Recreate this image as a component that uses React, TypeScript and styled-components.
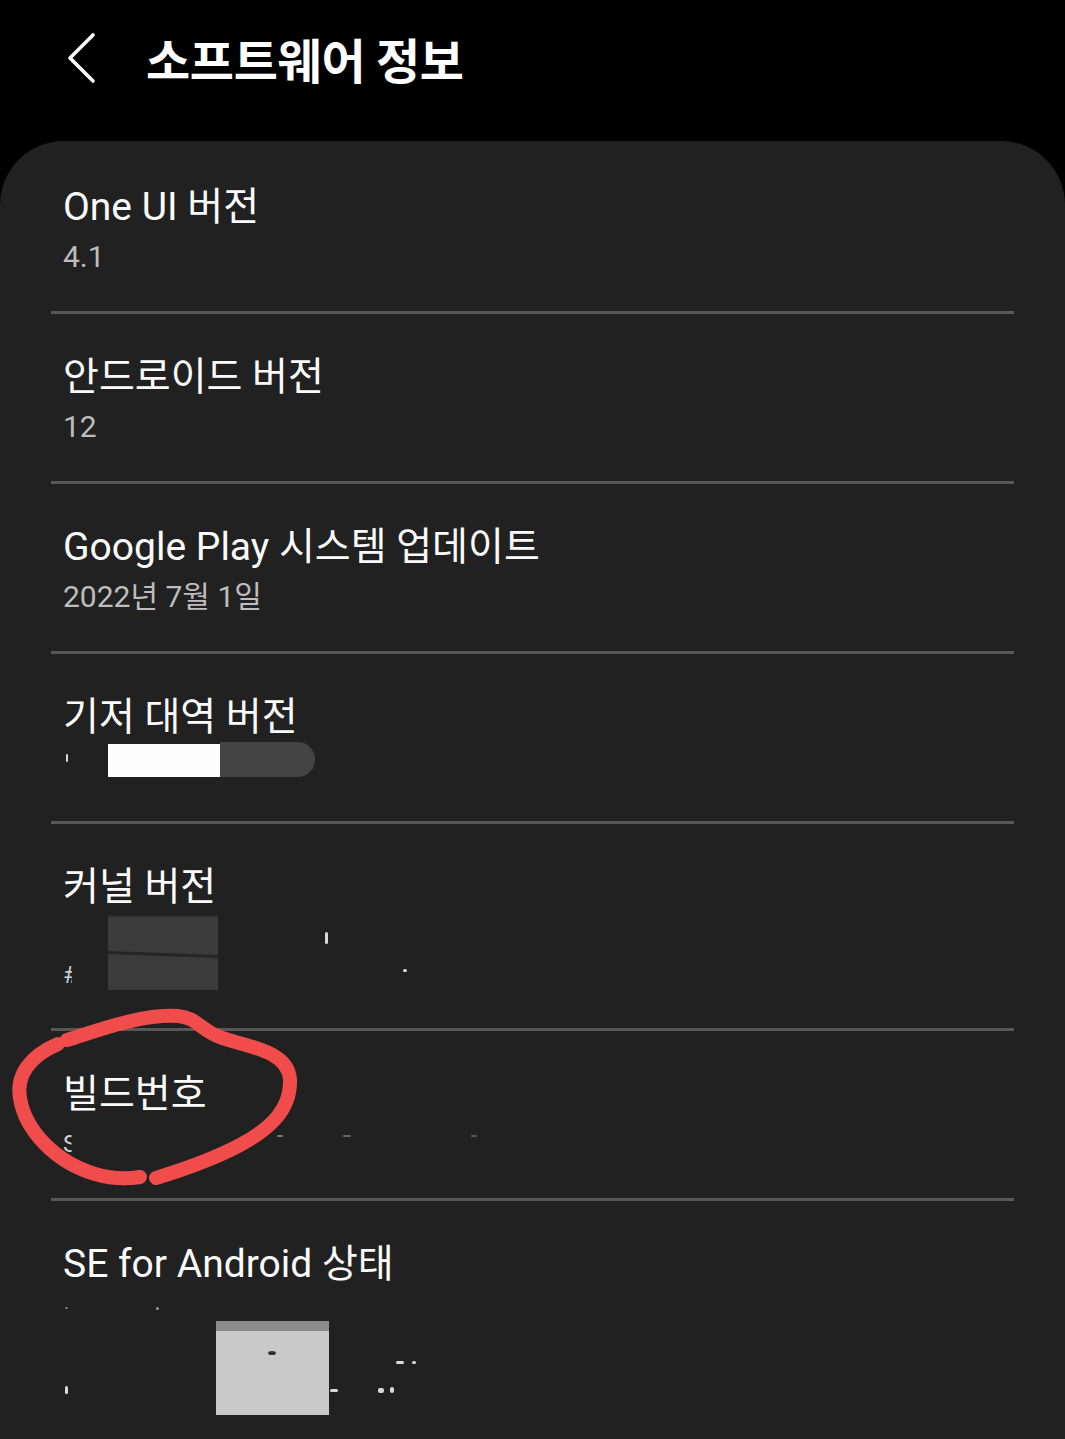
import React from 'react';
import styled, { createGlobalStyle } from 'styled-components';

const GlobalStyle = createGlobalStyle`
    html, body {
        margin: 0;
        padding: 0;
        background: #000;
    }
    body {
        font-family: Roboto, "Noto Sans CJK KR", sans-serif;
    }
`;

const Page = styled.main`
    width: 1065px;
    min-height: 1439px;
    background: #000;
    display: flex;
    flex-direction: column;
    overflow: hidden;
`;

const Header = styled.header`
    height: 141px;
    box-sizing: border-box;
    display: flex;
    align-items: flex-start;
    padding: 28px 0 0 66px;
    gap: 48px;
`;

const BackButton = styled.button`
    width: 32px;
    height: 60px;
    padding: 0;
    border: none;
    background: none;
    display: flex;
    align-items: center;
    justify-content: center;
`;

const Title = styled.h1`
    margin: 0;
    color: #fff;
    font-family: "Noto Sans CJK KR", Roboto, sans-serif;
    font-size: 48px;
    font-weight: 700;
    line-height: 60px;
    letter-spacing: -0.3px;
`;

const Card = styled.section`
    flex: 1;
    background: #212121;
    border-radius: 64px 64px 0 0;
    padding: 3px 51px 0;
`;

const Row = styled.div<{ $last?: boolean }>`
    position: relative;
    padding: 38px 12px 35px;
    border-bottom: ${(p) => (p.$last ? 'none' : '3px solid #575757')};
`;

const RowTitle = styled.div`
    color: #fafafa;
    font-size: 39px;
    line-height: 50px;
    height: 50px;
    white-space: nowrap;
`;

const RowValue = styled.div`
    margin-top: 6px;
    color: #bdbdbd;
    font-size: 30px;
    line-height: 38px;
    min-height: 38px;
`;

const RedactLine = styled.div`
    display: flex;
    align-items: center;
    height: 38px;
    position: relative;
`;

const Block = styled.div<{ $w: number; $h: number; $bg: string; $round?: string; $shift?: number }>`
    width: ${(p) => p.$w}px;
    height: ${(p) => p.$h}px;
    background: ${(p) => p.$bg};
    border-radius: ${(p) => p.$round ?? '0'};
    flex: none;
    transform: translateY(${(p) => p.$shift ?? 0}px);
`;

const Speck = styled.span<{ $w: number; $h: number; $gap: number; $color?: string; $shift?: number }>`
    display: inline-block;
    width: ${(p) => p.$w}px;
    height: ${(p) => p.$h}px;
    margin-left: ${(p) => p.$gap}px;
    background: ${(p) => p.$color ?? '#d8d8d8'};
    border-radius: 2px;
    flex: none;
    transform: translateY(${(p) => p.$shift ?? 0}px);
`;

const Fragment = styled.span<{ $gap?: number }>`
    color: #cfcfcf;
    font-size: 24px;
    line-height: 1;
    margin-left: ${(p) => p.$gap ?? 0}px;
    clip-path: inset(0 40% 0 0);
`;

const KernelBox = styled.div`
    position: relative;
    height: 75px;
`;

const KernelBlock = styled.div`
    position: absolute;
    left: 45px;
    top: -3px;
    width: 110px;
    height: 73px;
    background: #3b3b3b;
    border-top: 2px solid #2a2a2a;
    &::after {
        content: '';
        position: absolute;
        left: 0;
        right: 0;
        top: 36px;
        height: 3px;
        background: #262626;
        transform: skewY(2deg);
    }
`;

const SeBox = styled.div`
    position: relative;
    height: 120px;
`;

const SeBlock = styled.div`
    position: absolute;
    left: 153px;
    top: 26px;
    width: 113px;
    height: 94px;
    background: #c9c9c9;
    border-top: 10px solid #8c8c8c;
    box-sizing: border-box;
    &::after {
        content: '';
        position: absolute;
        left: 52px;
        top: 20px;
        width: 8px;
        height: 4px;
        border-radius: 50%;
        background: #333;
    }
`;

const Marker = styled.svg`
    position: absolute;
    left: -51px;
    top: -31px;
    width: 320px;
    height: 200px;
    pointer-events: none;
    overflow: visible;
`;

const ChevronLeft = () => (
    <svg width="32" height="52" viewBox="0 0 32 52" fill="none">
        <polyline points="27,3 4,26 27,49" stroke="#fff" strokeWidth="3.6" strokeLinecap="round" strokeLinejoin="round" />
    </svg>
);

const items = [
    { title: 'One UI 버전', value: '4.1' },
    { title: '안드로이드 버전', value: '12' },
    { title: 'Google Play 시스템 업데이트', value: '2022년 7월 1일' },
];

const App: React.FC = () => {
    return (
        <Page>
            <GlobalStyle />
            <Header>
                <BackButton aria-label="뒤로">
                    <ChevronLeft />
                </BackButton>
                <Title>소프트웨어 정보</Title>
            </Header>
            <Card>
                {items.map((item) => (
                    <Row key={item.title}>
                        <RowTitle>{item.title}</RowTitle>
                        <RowValue>{item.value}</RowValue>
                    </Row>
                ))}
                <Row>
                    <RowTitle>기저 대역 버전</RowTitle>
                    <RowValue>
                        <RedactLine>
                            <Speck $w={2} $h={8} $gap={3} $shift={-9} />
                            <Block $w={112} $h={33} $bg="#fdfdfd" $shift={-7} style={{ marginLeft: 40 }} />
                            <Block $w={95} $h={35} $bg="#444" $round="0 18px 18px 0" $shift={-8} />
                        </RedactLine>
                    </RowValue>
                </Row>
                <Row>
                    <RowTitle>커널 버전</RowTitle>
                    <RowValue>
                        <KernelBox>
                            <KernelBlock />
                            <RedactLine>
                                <Speck $w={3} $h={12} $gap={262} $shift={1} />
                            </RedactLine>
                            <RedactLine>
                                <Fragment>#</Fragment>
                                <Speck $w={4} $h={3} $gap={325} $shift={-5} />
                            </RedactLine>
                        </KernelBox>
                    </RowValue>
                </Row>
                <Row>
                    <Marker viewBox="0 1000 320 200">
                        <path
                            d="M 58 1044 C 30 1056, 16 1075, 20 1098 C 25 1130, 55 1162, 95 1174 C 112 1179, 128 1179, 140 1177"
                            stroke="#f04c4c"
                            strokeWidth="14"
                            fill="none"
                            strokeLinecap="round"
                        />
                        <path
                            d="M 67 1040 C 100 1030, 140 1014, 178 1016 C 200 1018, 198 1032, 232 1041 C 262 1049, 289 1056, 290 1080 C 291 1108, 272 1128, 240 1145 C 212 1160, 182 1170, 156 1178"
                            stroke="#f04c4c"
                            strokeWidth="14"
                            fill="none"
                            strokeLinecap="round"
                        />
                    </Marker>
                    <RowTitle>빌드번호</RowTitle>
                    <RowValue>
                        <RedactLine>
                            <Fragment>S</Fragment>
                            <Speck $w={6} $h={2} $gap={200} $color="#777" $shift={-8} />
                            <Speck $w={8} $h={2} $gap={60} $color="#666" $shift={-8} />
                            <Speck $w={6} $h={2} $gap={120} $color="#555" $shift={-8} />
                        </RedactLine>
                    </RowValue>
                </Row>
                <Row $last>
                    <RowTitle>SE for Android 상태</RowTitle>
                    <RowValue>
                        <SeBox>
                            <SeBlock />
                            <RedactLine>
                                <Speck $w={3} $h={2} $gap={2} $color="#777" $shift={-6} />
                                <Speck $w={3} $h={3} $gap={88} $color="#999" $shift={-6} />
                            </RedactLine>
                            <RedactLine>
                                <Speck $w={8} $h={3} $gap={333} $shift={10} />
                                <Speck $w={4} $h={3} $gap={8} $shift={10} />
                            </RedactLine>
                            <RedactLine>
                                <Speck $w={3} $h={8} $gap={2} />
                                <Speck $w={8} $h={3} $gap={262} />
                                <Speck $w={6} $h={5} $gap={40} />
                                <Speck $w={4} $h={6} $gap={6} />
                            </RedactLine>
                        </SeBox>
                    </RowValue>
                </Row>
            </Card>
        </Page>
    );
};

export default App;
